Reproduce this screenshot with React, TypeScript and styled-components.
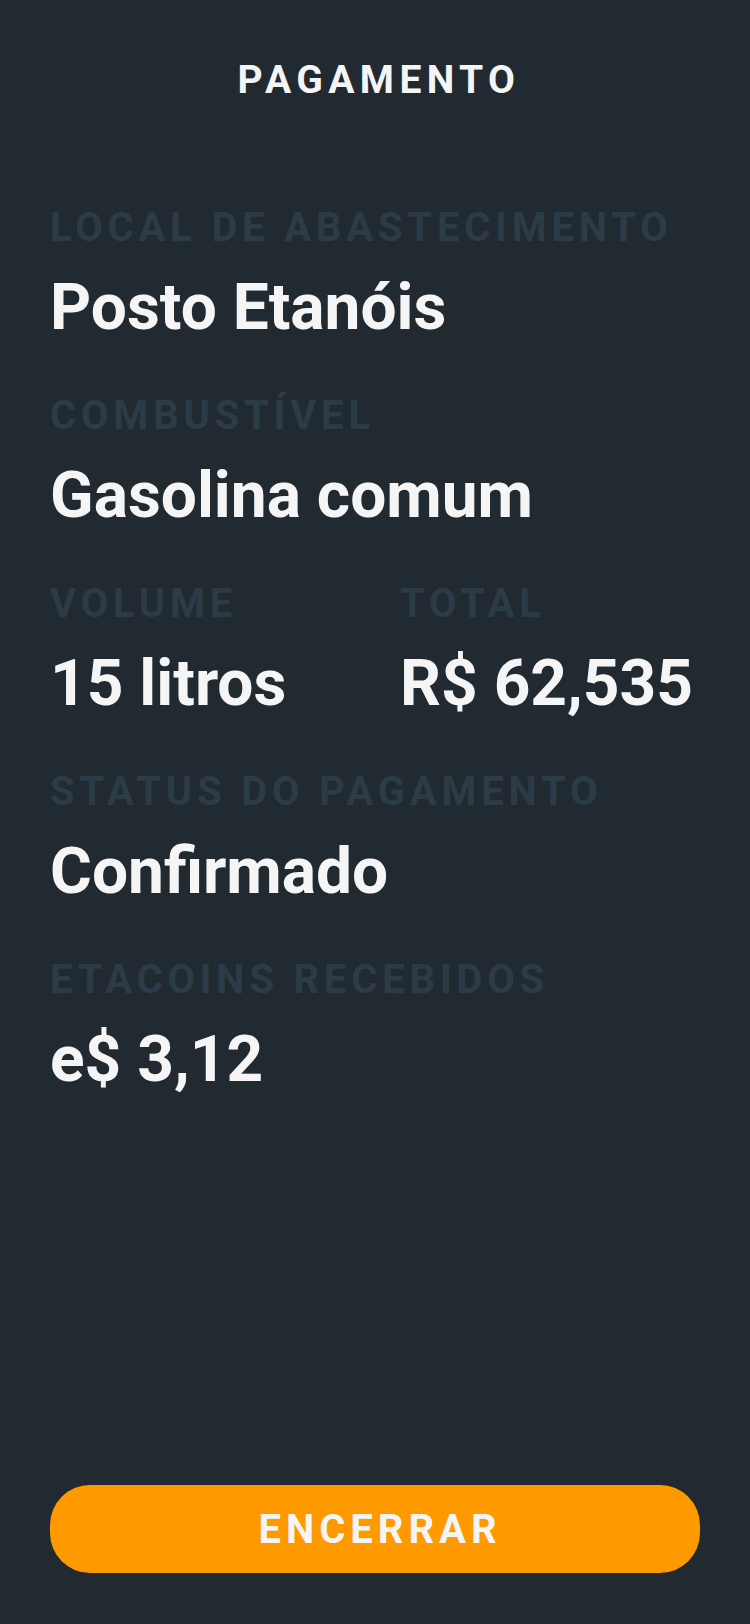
import styled, { createGlobalStyle } from 'styled-components'

const GlobalStyle = createGlobalStyle`
	html, body {
		margin: 0;
		padding: 0;
		background: #212a30;
	}
	* {
		box-sizing: border-box;
	}
`

const App = () => {
	return (
		<>
			<GlobalStyle />
			<Screen>
				<Title>PAGAMENTO</Title>

				<Fields>
					<Field>
						<Label>LOCAL DE ABASTECIMENTO</Label>
						<Value>Posto Etanóis</Value>
					</Field>
					<Field>
						<Label>COMBUSTÍVEL</Label>
						<Value>Gasolina comum</Value>
					</Field>
					<Row>
						<Field>
							<Label>VOLUME</Label>
							<Value>15 litros</Value>
						</Field>
						<Field>
							<Label>TOTAL</Label>
							<Value>R$ 62,535</Value>
						</Field>
					</Row>
					<Field>
						<Label>STATUS DO PAGAMENTO</Label>
						<Value>Confirmado</Value>
					</Field>
					<Field>
						<Label>ETACOINS RECEBIDOS</Label>
						<Value>e$ 3,12</Value>
					</Field>
				</Fields>

				<Button type='button'>ENCERRAR</Button>
			</Screen>
		</>
	)
}

export default App

const Screen = styled.div`
	display: flex;
	flex-direction: column;
	width: 750px;
	height: 1624px;
	padding: 56px 50px 51px;
	background: #212a30;
	font-family: Roboto, 'Noto Sans', sans-serif;
`

const Title = styled.h1`
	margin: 0;
	padding-left: 8px;
	text-align: center;
	font-size: 39px;
	line-height: 48px;
	font-weight: 700;
	letter-spacing: 5.4px;
	color: #f5f5f5;
`

const Fields = styled.div`
	display: flex;
	flex-direction: column;
	gap: 46px;
	margin-top: 100px;
`

const Row = styled.div`
	display: grid;
	grid-template-columns: 350px 1fr;
`

const Field = styled.div`
	display: flex;
	flex-direction: column;
	gap: 18px;
`

const Label = styled.span`
	font-size: 40px;
	line-height: 48px;
	font-weight: 700;
	letter-spacing: 4.8px;
	color: #2c3c47;
	white-space: nowrap;
`

const Value = styled.span`
	font-size: 64px;
	line-height: 76px;
	font-weight: 700;
	color: #f5f5f5;
	white-space: nowrap;
`

const Button = styled.button`
	display: flex;
	align-items: center;
	justify-content: center;
	margin-top: auto;
	width: 100%;
	height: 88px;
	padding: 0 0 0 10px;
	border: none;
	border-radius: 40px;
	background: #ff9900;
	font-family: Roboto, 'Noto Sans', sans-serif;
	font-size: 40px;
	font-weight: 700;
	letter-spacing: 5px;
	color: #f5f5f5;
	cursor: pointer;
`
